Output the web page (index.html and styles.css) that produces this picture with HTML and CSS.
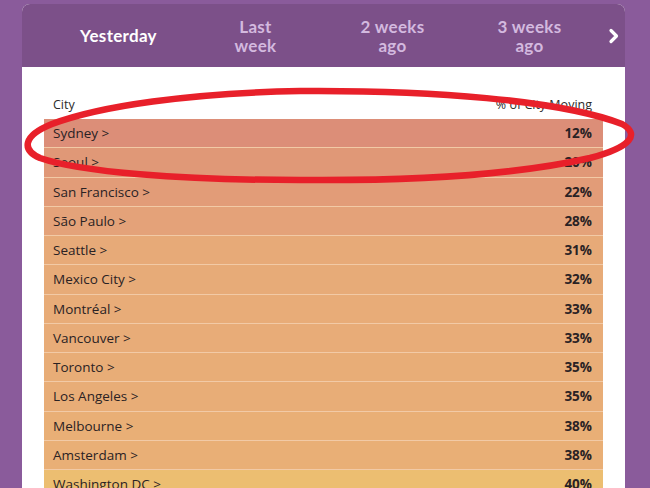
FILE: index.html
```html
<!DOCTYPE html>
<html lang="en">
<head>
    <meta charset="UTF-8">
    <meta name="viewport" content="width=device-width, initial-scale=1.0">
    <title>City Moving</title>
    <link rel="stylesheet" href="styles.css">
</head>
<body>
    <div class="card">
        <div class="tabs">
            <div class="tab active">Yesterday</div>
            <div class="tab">Last<br>week</div>
            <div class="tab">2 weeks<br>ago</div>
            <div class="tab">3 weeks<br>ago</div>
            <div class="next">
                <svg width="12" height="16" viewBox="0 0 12 16"><path d="M3 2.5 L8.5 8 L3 13.5" fill="none" stroke="#fff" stroke-width="3.2" stroke-linecap="round" stroke-linejoin="round"/></svg>
            </div>
        </div>

        <div class="table-wrap">
            <div class="table-head">
                <span>City</span>
                <span>% of City Moving</span>
            </div>
            <div class="rows">
                <div class="row" style="background:#dc8e78"><span class="city">Sydney &gt;</span><span class="pct">12%</span></div>
                <div class="row" style="background:#e09877"><span class="city">Seoul &gt;</span><span class="pct">20%</span></div>
                <div class="row" style="background:#e29c78"><span class="city">San Francisco &gt;</span><span class="pct">22%</span></div>
                <div class="row" style="background:#e4a279"><span class="city">São Paulo &gt;</span><span class="pct">28%</span></div>
                <div class="row" style="background:#e7aa78"><span class="city">Seattle &gt;</span><span class="pct">31%</span></div>
                <div class="row" style="background:#e7ab78"><span class="city">Mexico City &gt;</span><span class="pct">32%</span></div>
                <div class="row" style="background:#e8ac78"><span class="city">Montréal &gt;</span><span class="pct">33%</span></div>
                <div class="row" style="background:#e8ac78"><span class="city">Vancouver &gt;</span><span class="pct">33%</span></div>
                <div class="row" style="background:#e8ad77"><span class="city">Toronto &gt;</span><span class="pct">35%</span></div>
                <div class="row" style="background:#e8ad77"><span class="city">Los Angeles &gt;</span><span class="pct">35%</span></div>
                <div class="row" style="background:#e9af76"><span class="city">Melbourne &gt;</span><span class="pct">38%</span></div>
                <div class="row" style="background:#e9af76"><span class="city">Amsterdam &gt;</span><span class="pct">38%</span></div>
                <div class="row" style="background:#ecbe71"><span class="city">Washington DC &gt;</span><span class="pct">40%</span></div>
            </div>
        </div>
    </div>

    <!-- hand-drawn highlight round the first row -->
    <svg class="mark" width="650" height="200" viewBox="0 0 650 200">
        <path d="M300 91 C430 90 560 100 622 124 C640 134 632 147 590 158 C520 174 420 181 300 180 C180 180 80 172 40 158 C22 150 22 136 52 124 C100 106 190 93 300 91 Z"
              fill="none" stroke="#e8202a" stroke-width="6.5"/>
    </svg>
</body>
</html>
```

FILE: styles.css
```css
body {
    margin: 0;
    padding: 4px 25px 0 22px;
    height: 488px;
    box-sizing: border-box;
    overflow: hidden;
    background-color: #8a5b9b;
    font-family: 'Open Sans', 'Lato', sans-serif;
    position: relative;
}

.card {
    background: #ffffff;
    border-radius: 8px 8px 0 0;
    overflow: hidden;
    height: 100%;
}

/* Week tabs */
.tabs {
    height: 63px;
    background: #7c5089;
    display: flex;
    align-items: center;
    padding-left: 28px;
}

.tab {
    width: 137px;
    text-align: center;
    font-family: 'Lato', sans-serif;
    font-size: 17px;
    font-weight: 700;
    letter-spacing: 0.3px;
    line-height: 19px;
    color: #d3b9df;
}

.tab.active {
    color: #ffffff;
}

.next {
    margin-left: 10px;
    display: flex;
    align-items: center;
}

/* Table */
.table-wrap {
    padding: 0 22px;
}

.table-head {
    display: flex;
    justify-content: space-between;
    padding: 29px 11px 5px 9px;
    font-size: 12.5px;
    line-height: 18px;
    color: #2b2b2b;
}

.row {
    display: flex;
    justify-content: space-between;
    align-items: center;
    height: 28.25px;
    padding: 0 11px 0 9px;
    border-bottom: 1px solid #f2caa6;
    font-size: 13.5px;
    color: #2a2224;
}

.pct {
    font-weight: 700;
}

.mark {
    position: absolute;
    left: 0;
    top: 0;
}
```
